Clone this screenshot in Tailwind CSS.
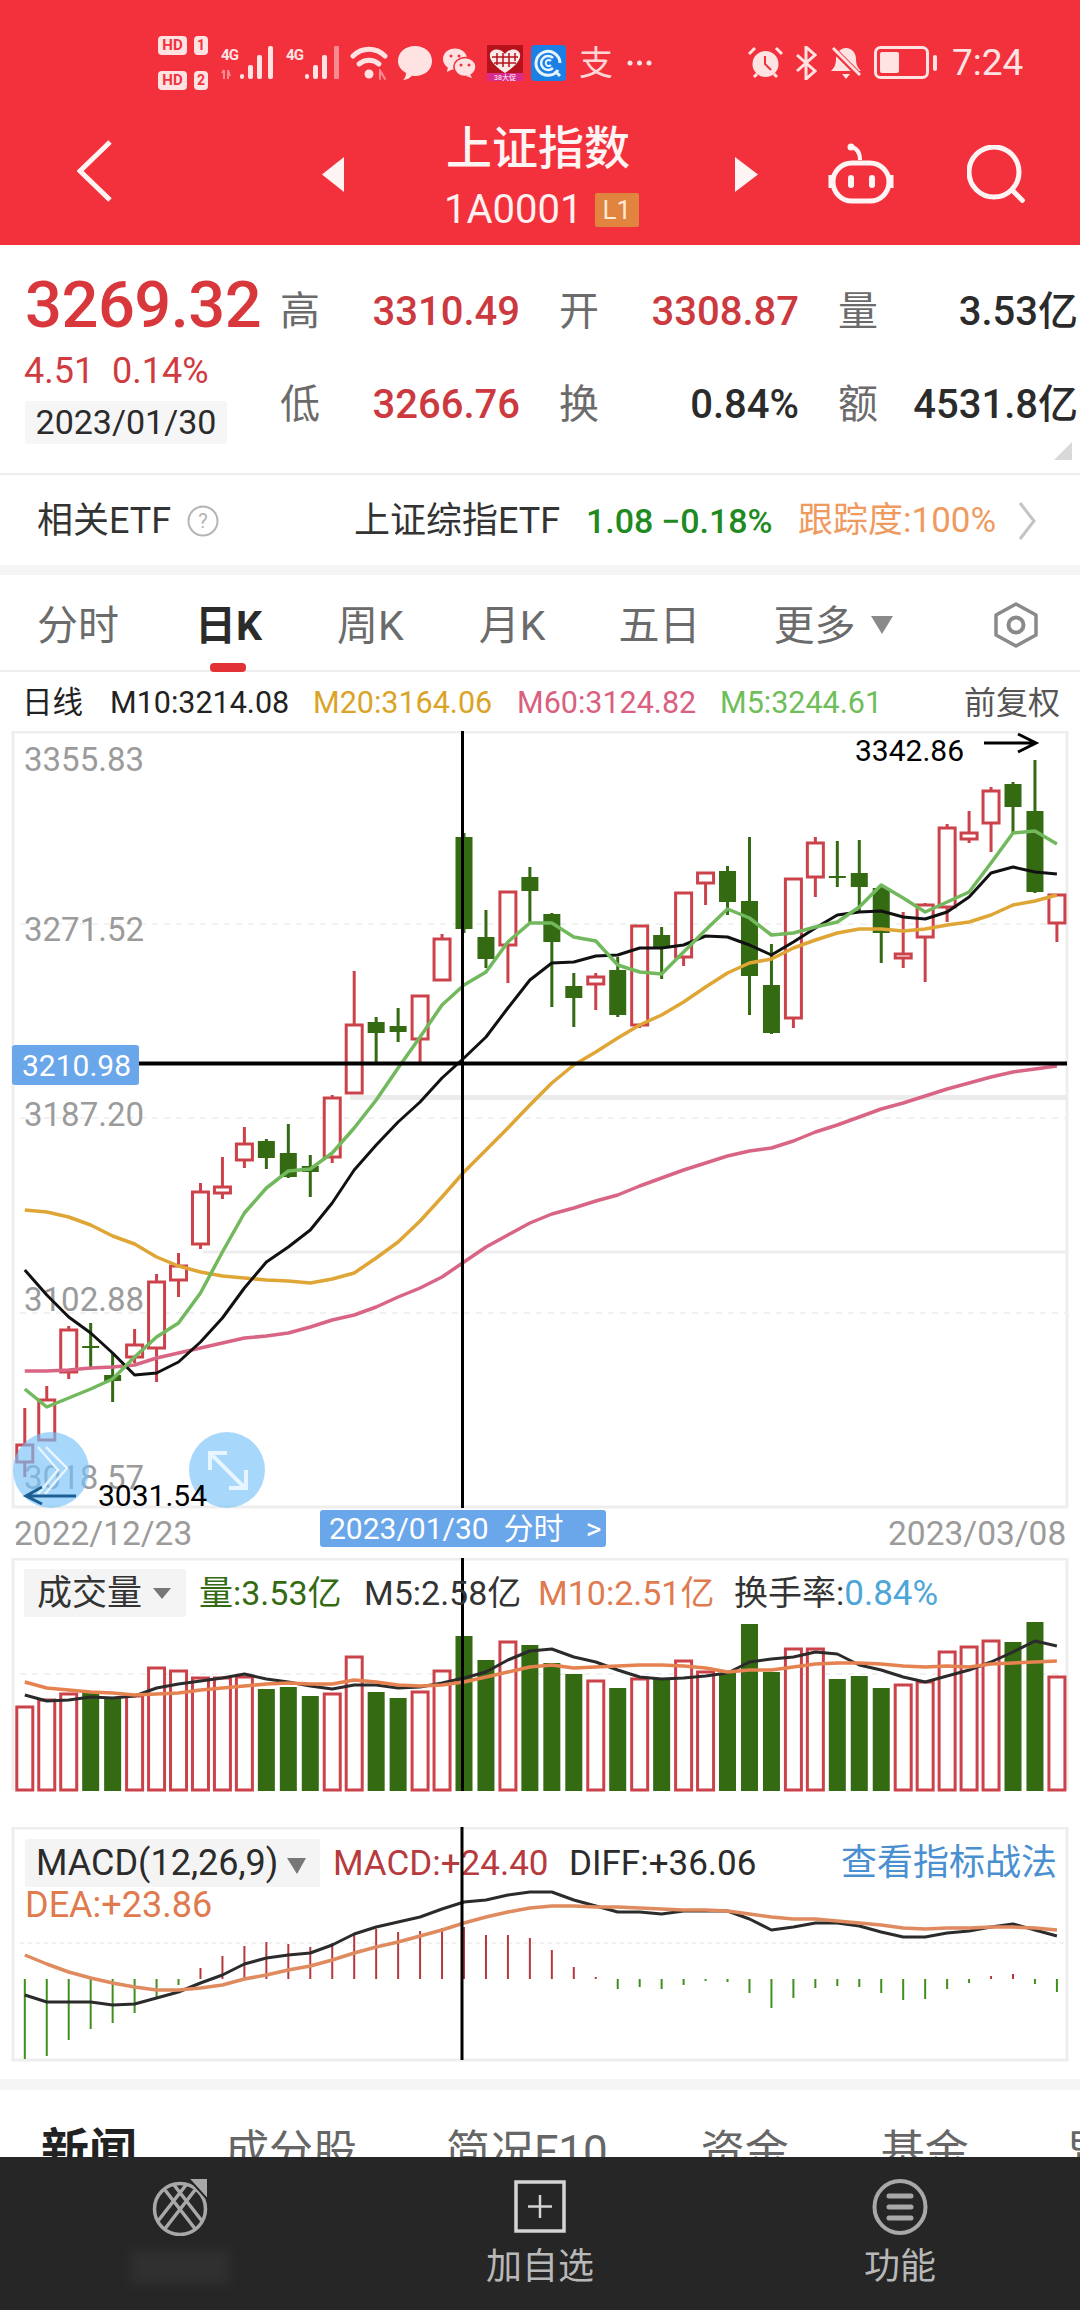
<!DOCTYPE html>
<html lang="zh">
  <head>
    <meta charset="UTF-8" />
    <meta name="viewport" content="width=device-width, initial-scale=1.0" />
    <title>上证指数</title>
    <script src="https://cdn.jsdelivr.net/npm/@tailwindcss/browser@4"></script>
  </head>

  <body class="w-[1080px] h-[2310px] overflow-hidden bg-white [font-family:Roboto,'Noto_Sans_CJK_SC',sans-serif]">
    <!-- red header -->
    <header class="h-[245px] bg-[#f2313d] text-white">
      <!-- status bar -->
      <div class="h-[124px] flex items-center pl-[158px] pt-[1px]">
        <div class="w-[50px] flex flex-col gap-[16px]">
          <div class="flex justify-between">
            <span class="w-[29px] h-[19px] rounded-[4px] bg-[#ffe3e3] text-[#f2313d] text-[15px] leading-[19px] font-bold text-center">HD</span>
            <span class="w-[14px] h-[19px] rounded-[4px] bg-[#ffe3e3] text-[#f2313d] text-[14px] leading-[19px] font-bold text-center">1</span>
          </div>
          <div class="flex justify-between">
            <span class="w-[29px] h-[19px] rounded-[4px] bg-[#ffe3e3] text-[#f2313d] text-[15px] leading-[19px] font-bold text-center">HD</span>
            <span class="w-[14px] h-[19px] rounded-[4px] bg-[#ffe3e3] text-[#f2313d] text-[14px] leading-[19px] font-bold text-center">2</span>
          </div>
        </div>
        <svg class="ml-[13px]" width="53" height="34" viewBox="0 0 53 34" fill="#ffe3e3">
          <text x="0" y="14" font-size="15" font-weight="700" textLength="18">4G</text>
          <path d="M3 24v9M3 24l-2 3M7 33v-9l2 6" stroke="#f98a90" stroke-width="2" fill="none" />
          <rect x="19" y="28" width="4" height="5" rx="2" /><rect x="27" y="19" width="5" height="14" rx="2" /><rect x="36" y="9" width="5" height="24" rx="2" /><rect x="47" y="0" width="5" height="33" rx="2" />
        </svg>
        <svg class="ml-[12px]" width="53" height="34" viewBox="0 0 53 34" fill="#ffe3e3">
          <text x="0" y="14" font-size="15" font-weight="700" textLength="18">4G</text>
          <rect x="19" y="28" width="4" height="5" rx="2" /><rect x="27" y="19" width="5" height="14" rx="2" /><rect x="36" y="9" width="5" height="24" rx="2" /><rect x="48" y="0" width="5" height="33" rx="1" fill="#f98a90" />
        </svg>
        <svg class="ml-[11px]" width="38" height="34" viewBox="0 0 38 34" fill="none" stroke="#ffe3e3" stroke-width="5" stroke-linecap="round">
          <path d="M3 10c9-9 23-9 32 0" /><path d="M9 18c6-5 14-5 20 0" /><circle cx="19" cy="28" r="4.500" fill="#ffe3e3" stroke="none" />
          <path d="M30 24v9M35 33l-4-7" stroke="#f98a90" stroke-width="2" />
        </svg>
        <svg class="ml-[10px]" width="34" height="34" viewBox="0 0 34 34" fill="#ffe3e3">
          <path d="M17 0c10 0 17 6.500 17 15s-7 15-17 15c-1 0-2 0-3-.2C12 32 9 34 5 34c2-2 3-4 3-7C3 24 0 20 0 15 0 6.500 7 0 17 0z" />
        </svg>
        <svg class="ml-[11px]" width="33" height="30" viewBox="0 0 33 30" fill="#ffe3e3">
          <ellipse cx="12" cy="11" rx="12" ry="10.500" /><path d="M5 18l-1 6 6-3z" />
          <ellipse cx="22" cy="19" rx="11" ry="9.500" stroke="#f2313d" stroke-width="1.500" /><path d="M27 26l2 4-6-2z" />
          <circle cx="8" cy="8" r="1.500" fill="#f2313d" /><circle cx="16" cy="8" r="1.500" fill="#f2313d" /><circle cx="18" cy="17" r="1.500" fill="#f2313d" /><circle cx="26" cy="17" r="1.500" fill="#f2313d" />
        </svg>
        <svg class="ml-[11px]" width="36" height="36" viewBox="0 0 36 36">
          <rect width="36" height="36" fill="#b5121b" />
          <rect y="28" width="36" height="8" fill="#d92a8d" />
          <path d="M18 28C6 20 2 14 3 9c1-5 10-7 15 0 5-7 14-5 15 0 1 5-3 11-15 19z" fill="#fbe9e9" />
          <path d="M10 8v12M16 8v14M22 8v14M28 8v8M5 12h26M7 18h22" stroke="#b5121b" stroke-width="1.500" />
          <text x="18" y="35" font-size="7" fill="#fff" text-anchor="middle">38大促</text>
        </svg>
        <svg class="ml-[8px]" width="35" height="36" viewBox="0 0 35 36" fill="none">
          <rect width="35" height="36" rx="4" fill="#1b7fe3" />
          <path d="M27 25a12 12 0 1 1 2-7M29 31l-5-5" stroke="#e6f5ff" stroke-width="3" />
          <path d="M22 13a7 7 0 1 0 0 10" stroke="#e6f5ff" stroke-width="2.500" />
          <path d="M20 16a3 3 0 1 0 0 4" stroke="#e6f5ff" stroke-width="2" />
        </svg>
        <span class="ml-[13px] w-[33px] text-[34px] leading-[36px] text-[#ffd6d6]">支</span>
        <svg class="ml-[15px]" width="25" height="6" viewBox="0 0 25 6" fill="#ffe3e3"><circle cx="3" cy="3" r="2.500" /><circle cx="12.500" cy="3" r="2.500" /><circle cx="22" cy="3" r="2.500" /></svg>
        <svg class="ml-[96px]" width="35" height="34" viewBox="0 0 35 34" fill="none">
          <circle cx="17.500" cy="18" r="13" fill="#ffe3e3" />
          <path d="M17 10v8l6 6" stroke="#f2313d" stroke-width="2" />
          <path d="M1 8l6-6M34 8l-6-6M6 31l3-3M29 31l-3-3" stroke="#ffe3e3" stroke-width="3" />
        </svg>
        <svg class="ml-[12px]" width="22" height="34" viewBox="0 0 22 34" fill="none" stroke="#ffe3e3" stroke-width="3">
          <path d="M2 9l18 16-9 8V1l9 8L2 25" />
        </svg>
        <svg class="ml-[13px]" width="32" height="34" viewBox="0 0 32 34" fill="none">
          <path d="M16 2c6 0 10 5 10 11 0 6 2 9 5 12H1c3-3 5-6 5-12C6 7 10 2 16 2z" fill="#ffe3e3" />
          <path d="M12 28h8l-4 5z" fill="#ffe3e3" />
          <path d="M2 2l28 28" stroke="#f2313d" stroke-width="6" /><path d="M3 2l27 27" stroke="#ffe3e3" stroke-width="3" />
        </svg>
        <svg class="ml-[12px]" width="63" height="33" viewBox="0 0 63 33" fill="none">
          <rect x="1.500" y="1.500" width="52" height="30" rx="5" stroke="#ffe3e3" stroke-width="3" />
          <rect x="6" y="6" width="19" height="21" rx="2" fill="#ffe3e3" />
          <rect x="59" y="9" width="4" height="16" rx="2" fill="#ffe3e3" />
        </svg>
        <span class="ml-[15px] text-[37px] leading-[40px] text-[#ffe3e3]">7:24</span>
      </div>
      <!-- title row -->
      <nav class="h-[121px] flex items-start pl-[77px]">
        <svg class="mt-[16px]" width="35" height="62" viewBox="0 0 35 62" fill="none" stroke="#fff4f4" stroke-width="5"><path d="M33 2L3 31l30 29" /></svg>
        <svg class="ml-[210px] mt-[33px]" width="22" height="35" viewBox="0 0 22 35" fill="#fff4f4"><path d="M22 0v35L0 17.500z" /></svg>
        <div class="ml-[100px] w-[195px]">
          <div class="pl-[2px] text-[46px] leading-[46px] font-medium text-[#fff4f4] mt-[1px]">上证指数</div>
          <div class="mt-[22px] flex items-center h-[34px]">
            <span class="text-[40px] leading-[34px] text-[#fff0f0]">1A0001</span>
            <span class="ml-[12px] w-[48px] h-[34px] rounded-[2px] bg-[#e0843f] text-[26px] leading-[34px] text-center text-[#ffe9d6]">L1</span>
          </div>
        </div>
        <svg class="ml-[96px] mt-[33px]" width="23" height="35" viewBox="0 0 23 35" fill="#fff4f4"><path d="M0 0v35l23-17.500z" /></svg>
        <svg class="ml-[69px] mt-[18px]" width="68" height="62" viewBox="0 0 68 62" fill="none" stroke="#fff4f4" stroke-width="5">
          <rect x="6" y="21" width="56" height="38" rx="19" />
          <path d="M4 33v13M64 33v13" />
          <path d="M33 18c0-7-3-12-9-13" stroke-width="4" /><circle cx="24" cy="5" r="3.500" fill="#fff4f4" stroke="none" />
          <rect x="21" y="33" width="6" height="13" rx="3" fill="#fff4f4" stroke="none" /><rect x="42" y="33" width="6" height="13" rx="3" fill="#fff4f4" stroke="none" />
        </svg>
        <svg class="ml-[72px] mt-[21px]" width="58" height="58" viewBox="0 0 58 58" fill="none" stroke="#fff4f4" stroke-width="5"><circle cx="27" cy="27" r="25" /><path d="M45 45l12 12" /></svg>
      </nav>
    </header>

    <!-- quote -->
    <section class="relative h-[228px] flex pl-[25px]">
      <div class="w-[255px]">
        <div class="pt-[24px] text-[65px] leading-[72px] font-medium text-[#d8383c] tracking-[-0.5px] whitespace-nowrap">3269.32</div>
        <div class="mt-[10px] text-[36px] leading-[40px] text-[#cf3b3f] whitespace-pre -ml-[1px]">4.51  0.14%</div>
        <div class="mt-[10px] w-[202px] h-[43px] bg-[#f6f6f6] rounded-[3px] text-[34px] leading-[43px] text-center text-[#2b2b2b]">2023/01/30</div>
      </div>
      <div class="pt-[20px] grid grid-cols-[40px_200px_80px_199px_81px_198px] auto-rows-[93px] items-center text-[40px] text-[#6b6b6b]">
        <span>高</span><span class="text-right text-[#cc3a3f] font-medium">3310.49</span>
        <span class="pl-[39px]">开</span><span class="text-right text-[#cc3a3f] font-medium">3308.87</span>
        <span class="pl-[39px]">量</span><span class="text-right text-[#2b2b2b] font-medium">3.53亿</span>
        <span>低</span><span class="text-right text-[#cc3a3f] font-medium">3266.76</span>
        <span class="pl-[39px]">换</span><span class="text-right text-[#2b2b2b] font-medium">0.84%</span>
        <span class="pl-[39px]">额</span><span class="text-right text-[#2b2b2b] font-medium">4531.8亿</span>
      </div>
      <svg class="absolute right-[8px] bottom-[13px]" width="18" height="18" viewBox="0 0 18 18" fill="#d9d9d9"><path d="M18 0v18H0z" /></svg>
    </section>

    <!-- related ETF -->
    <section class="h-[92px] border-t-2 border-[#eeeeee] pl-[37px] pt-[2px] grid grid-cols-[150px_167px_232px_75px_137px_220px_18px] items-center text-[#333333] text-[36px]">
      <span>相关ETF</span>
      <svg width="32" height="32" viewBox="0 0 32 32" fill="none"><circle cx="16" cy="16" r="14.500" stroke="#b5b5b5" stroke-width="2" /><text x="16" y="23" font-size="20" fill="#b5b5b5" text-anchor="middle">?</text></svg>
      <span>上证综指ETF</span>
      <span class="text-[34px] text-[#1f8a1f] font-medium">1.08</span>
      <span class="text-[34px] text-[#1f8a1f] font-medium">−0.18%</span>
      <span class="text-[35px] text-[#ef9a5f] whitespace-nowrap">跟踪度:100%</span>
      <svg width="18" height="40" viewBox="0 0 18 40" fill="none" stroke="#c4c4c4" stroke-width="3"><path d="M2 2l14 18L2 38" /></svg>
    </section>
    <div class="h-[10px] bg-[#f5f5f5]"></div>

    <!-- period tabs -->
    <section class="h-[97px] border-b-2 border-[#eeeeee]">
      <div class="flex items-center pl-[37px] pt-[31px] h-[71px] text-[41px] leading-[40px] text-[#6b6b6b]">
        <span>分时</span>
        <span class="ml-[76px] font-bold text-[#2b2b2b]">日K</span>
        <span class="ml-[75px]">周K</span>
        <span class="ml-[75px]">月K</span>
        <span class="ml-[73px]">五日</span>
        <span class="ml-[73px]">更多</span>
        <svg class="ml-[15px] -mt-[2px]" width="22" height="18" viewBox="0 0 22 18" fill="#8a8a8a"><path d="M0 0h22L11 18z" /></svg>
        <svg class="ml-[100px] -mt-[2px]" width="46" height="46" viewBox="0 0 46 46" fill="none" stroke="#8a8a8a" stroke-width="3.500"><path d="M23 2l20 11v20L23 44 3 33V13z" stroke-linejoin="round" /><circle cx="23" cy="23" r="7.500" stroke-width="4" /></svg>
      </div>
      <div class="ml-[210px] mt-[17px] w-[36px] h-[9px] rounded-[4px] bg-[#e33236]"></div>
    </section>

    <!-- moving average legend -->
    <section class="h-[59px] pl-[22px] pt-[3px] grid grid-cols-[88px_203px_204px_203px_244px_96px] items-center text-[30.5px] text-[#222222]">
      <span>日线</span>
      <span>M10:3214.08</span>
      <span class="text-[#d9a428]">M20:3164.06</span>
      <span class="text-[#d9607f]">M60:3124.82</span>
      <span class="text-[#6fbe5a]">M5:3244.61</span>
      <span class="text-[#555555] text-[32px] whitespace-nowrap">前复权</span>
    </section>

    <!-- candlestick chart -->
    <svg class="block" width="1080" height="827" viewBox="0 731 1080 827" font-size="33" fill="#9b9b9b">
      <rect x="13" y="732" width="1054" height="775" fill="none" stroke="#eeeeee" stroke-width="3" />
      <path d="M20 924H1067M20 1118H1067M20 1313H1067" stroke="#f1f1f1" stroke-width="2" stroke-dasharray="6 6" />
      <path d="M350 1097.500H1067" stroke="#ebebeb" stroke-width="5" />
      <path d="M203 1252H1067" stroke="#eeeeee" stroke-width="3" />
      <text x="24" y="771">3355.83</text>
      <text x="24" y="941">3271.52</text>
      <text x="24" y="1126">3187.20</text>
      <text x="24" y="1311">3102.88</text>
      <text x="24" y="1489">3018.57</text>
      <g id="candles"></g>
      <g id="ma-lines" fill="none" stroke-linejoin="round"></g>
      <path d="M462.500 731V1508" stroke="#000" stroke-width="3" />
      <path d="M139 1063.500H1067" stroke="#000" stroke-width="4" />
      <rect x="12" y="1045" width="127" height="40" rx="3" fill="#6aa6ea" />
      <text x="22" y="1076" font-size="30" fill="#fff">3210.98</text>
      <text x="855" y="761" font-size="30" fill="#000">3342.86</text>
      <path d="M984 743h52M1018 734l18 9-18 9" fill="none" stroke="#000" stroke-width="3" />
      <circle cx="51" cy="1470" r="38" fill="#78c3fa" fill-opacity="0.65" />
      <path d="M38 1447l20 23-20 24M46 1447l21 21-22 26" fill="none" stroke="#e6f5ff" stroke-width="2.500" />
      <circle cx="227" cy="1470" r="38" fill="#78c3fa" fill-opacity="0.65" />
      <path d="M212 1455l33 33M210 1470v-17h17M246 1470v18h-17" fill="none" stroke="#e6f5ff" stroke-width="4" />
      <path d="M26 1496h50M42 1487l-16 9 16 8" fill="none" stroke="#1d5f93" stroke-width="3" />
      <text x="98" y="1506" font-size="30" fill="#000">3031.54</text>
      <rect x="320" y="1510" width="286" height="37" rx="3" fill="#6aa6ea" />
      <text x="329" y="1539" font-size="30" fill="#fff" xml:space="preserve">2023/01/30  分时   &gt;</text>
      <text x="14" y="1545" font-size="33.500">2022/12/23</text>
      <text x="888" y="1545" font-size="33.500">2023/03/08</text>
    </svg>

    <!-- volume chart -->
    <svg class="block" width="1080" height="269" viewBox="0 1558 1080 269" font-size="34">
      <path d="M13 1790V1559H1067V1790" fill="none" stroke="#eeeeee" stroke-width="3" />
      <path d="M20 1674H1067" stroke="#f1f1f1" stroke-width="2" stroke-dasharray="6 6" />
      <g id="volume"></g>
      <g id="volume-lines" fill="none" stroke-linejoin="round"></g>
      <path d="M462.500 1558V1791" stroke="#000" stroke-width="3" />
      <rect x="24" y="1569" width="162" height="48" rx="2" fill="#f4f4f4" />
      <text x="37" y="1605" fill="#333333" font-size="35">成交量</text>
      <path d="M153 1588h18l-9 11z" fill="#777777" />
      <text x="199" y="1605" fill="#336a12">量:3.53亿</text>
      <text x="364" y="1605" fill="#333333">M5:2.58亿</text>
      <text x="538" y="1605" fill="#e07b4f">M10:2.51亿</text>
      <text x="734" y="1605" fill="#333333">换手率:<tspan fill="#4ea6d8" font-size="35">0.84%</tspan></text>
    </svg>

    <!-- MACD chart -->
    <svg class="block" width="1080" height="252" viewBox="0 1827 1080 252" font-size="35">
      <rect x="13" y="1828" width="1054" height="232" fill="none" stroke="#eeeeee" stroke-width="3" />
      <path d="M20 1943H1067" stroke="#f1f1f1" stroke-width="2" stroke-dasharray="4 4" />
      <rect x="25" y="1839" width="295" height="48" rx="2" fill="#f4f4f4" />
      <text x="36" y="1875" fill="#2b2b2b" font-size="36">MACD(12,26,9)</text>
      <path d="M287 1858h19l-9 16z" fill="#777777" />
      <text x="333" y="1875" fill="#b63a3e">MACD:+24.40</text>
      <text x="569" y="1875" fill="#2b2b2b">DIFF:+36.06</text>
      <text x="841" y="1875" fill="#4a8fd0" font-size="36">查看指标战法</text>
      <text x="25" y="1917" fill="#e07b4f" font-size="36">DEA:+23.86</text>
      <g id="macd-bars"></g>
      <g id="macd-lines" fill="none" stroke-linejoin="round"></g>
      <path d="M462 1827V2060" stroke="#000" stroke-width="3" />
    </svg>
    <div class="h-[11px] bg-[#f5f5f5]"></div>

    <!-- news tabs, cut off by the bottom bar -->
    <section class="h-[67px] overflow-hidden pl-[41px] pt-[38px] flex text-[44px] leading-[48px] text-[#666666] whitespace-nowrap">
      <span class="text-[48px] font-bold text-[#222222]">新闻</span>
      <span class="ml-[88px]">成分股</span>
      <span class="ml-[89px]">简况F10</span>
      <span class="ml-[93px]">资金</span>
      <span class="ml-[92px]">基金</span>
      <span class="ml-[97px]">异动</span>
    </section>

    <!-- bottom bar -->
    <footer class="h-[153px] bg-[#262626] pt-[21px] grid grid-cols-3 text-[36px] leading-[36px] text-[#b8b8b8]">
      <div class="flex flex-col items-center">
        <svg width="56" height="58" viewBox="0 0 56 58" fill="none" stroke="#a8a8a8" stroke-width="3.500">
          <circle cx="28" cy="31" r="25.500" />
          <path d="M13 12l31 40M22 7l28 36M43 12L12 52M34 7L6 43" />
          <path d="M36 0h20v22z" fill="#a8a8a8" stroke="#262626" stroke-width="2" />
        </svg>
        <div class="mt-[14px] w-[100px] h-[34px] bg-[#303030] blur-[6px]"></div>
      </div>
      <div class="flex flex-col items-center">
        <svg width="52" height="58" viewBox="0 0 52 58" fill="none" stroke="#d4d4d4"><rect x="2" y="4" width="48" height="49" stroke-width="3.500" /><path d="M26 17v23M14 28.500h24" stroke-width="2.500" /></svg>
        <span class="mt-[13px]">加自选</span>
      </div>
      <div class="flex flex-col items-center">
        <svg width="56" height="58" viewBox="0 0 56 58" fill="none" stroke="#a8a8a8"><ellipse cx="28" cy="29" rx="25.500" ry="26" stroke-width="4" /><path d="M17 18h22M17 29h22M17 40h22" stroke-width="5" stroke-linecap="round" /></svg>
        <span class="mt-[13px]">功能</span>
      </div>
    </footer>

    <script>
      const RED = "#cc424a";
      const GREEN = "#336a12";
      const xAt = (i) => 24.8 + 21.96 * i;
      const points = (ys) => ys.map((y, i) => `${xAt(i).toFixed(1)},${y}`).join(" ");
      const line = (ys, color, width = 3.5) =>
        `<polyline points="${points(ys)}" stroke="${color}" stroke-width="${width}" />`;

      // high, body top, body bottom, low, up(1) / down(0)
      const candles = [
        [1408, 1445, 1462, 1477, 1], [1386, 1400, 1440, 1440, 1], [1326, 1330, 1372, 1379, 1], [1323, 1346, 1348, 1368, 0],
        [1353, 1375, 1381, 1402, 0], [1329, 1345, 1357, 1363, 1], [1274, 1282, 1348, 1382, 1], [1253, 1266, 1280, 1297, 1],
        [1183, 1192, 1244, 1249, 1], [1157, 1187, 1193, 1199, 1], [1127, 1144, 1160, 1168, 1], [1139, 1141, 1158, 1169, 0],
        [1124, 1153, 1177, 1178, 0], [1155, 1166, 1172, 1197, 0], [1095, 1098, 1157, 1163, 1], [971, 1025, 1093, 1094, 1],
        [1017, 1022, 1033, 1063, 0], [1008, 1026, 1032, 1042, 0], [996, 996, 1039, 1062, 1], [934, 939, 980, 981, 1],
        [833, 837, 929, 933, 0], [910, 937, 959, 968, 0], [892, 892, 945, 983, 1], [867, 877, 891, 922, 0],
        [913, 914, 942, 1007, 0], [973, 986, 998, 1027, 0], [973, 977, 984, 1010, 1], [957, 970, 1015, 1017, 0],
        [926, 926, 1025, 1028, 1], [927, 935, 948, 979, 0], [893, 893, 957, 966, 1], [873, 873, 883, 905, 1],
        [866, 871, 902, 915, 0], [837, 901, 976, 1015, 0], [944, 985, 1033, 1034, 0], [879, 879, 1018, 1028, 1],
        [837, 843, 877, 897, 1], [841, 876, 878, 887, 0], [840, 873, 887, 913, 0], [885, 888, 933, 963, 0],
        [912, 954, 958, 968, 1], [903, 905, 937, 982, 1], [824, 828, 907, 922, 1], [811, 833, 839, 843, 1],
        [787, 791, 823, 852, 1], [782, 784, 807, 833, 0], [760, 811, 892, 893, 0], [895, 895, 923, 942, 1],
      ];
      document.getElementById("candles").innerHTML = candles
        .map(([high, top, bottom, low, up], i) => {
          const x = xAt(i);
          const color = up ? RED : GREEN;
          const wick = `<path d="M${x} ${high}V${top}M${x} ${bottom}V${low}" stroke="${color}" stroke-width="3" />`;
          return up
            ? wick + `<rect x="${x - 8}" y="${top}" width="16" height="${bottom - top}" fill="#fff" stroke="${color}" stroke-width="3" />`
            : wick + `<rect x="${x - 8.5}" y="${top}" width="17" height="${bottom - top}" fill="${color}" />`;
        })
        .join("");

      const m5 = [1389, 1407, 1398, 1389, 1379, 1357, 1337, 1323, 1293, 1252, 1213, 1188, 1171, 1169, 1153, 1128, 1100, 1068, 1037, 1005, 985, 972, 942, 923, 923, 937, 941, 965, 972, 974, 952, 930, 909, 918, 935, 933, 927, 922, 907, 885, 898, 912, 902, 892, 863, 833, 831, 844];
      const m10 = [1270, 1295, 1317, 1333, 1353, 1375, 1373, 1362, 1342, 1318, 1288, 1262, 1247, 1230, 1203, 1170, 1145, 1122, 1102, 1078, 1058, 1037, 1008, 980, 963, 962, 956, 955, 948, 948, 945, 936, 937, 945, 955, 942, 928, 915, 912, 911, 917, 919, 912, 897, 873, 867, 872, 874];
      const m20 = [1210, 1212, 1217, 1225, 1236, 1244, 1257, 1266, 1272, 1276, 1278, 1280, 1281, 1283, 1279, 1273, 1258, 1242, 1221, 1197, 1172, 1150, 1128, 1105, 1083, 1065, 1052, 1038, 1025, 1015, 1002, 987, 973, 963, 959, 948, 940, 933, 929, 929, 931, 929, 925, 922, 915, 905, 901, 895];
      const m60 = [1371, 1371, 1370, 1368, 1367, 1365, 1358, 1353, 1348, 1343, 1338, 1336, 1333, 1327, 1320, 1315, 1307, 1297, 1288, 1277, 1262, 1247, 1235, 1223, 1214, 1208, 1201, 1195, 1186, 1178, 1170, 1163, 1156, 1151, 1148, 1141, 1132, 1125, 1117, 1109, 1103, 1096, 1089, 1083, 1077, 1072, 1069, 1066];
      document.getElementById("ma-lines").innerHTML =
        line(m60, "#d96585") + line(m20, "#dfa636") + line(m10, "#111111", 3) + line(m5, "#72b85c");

      // top of each bar, negative = down day
      const volume = [1707, 1700, 1694, -1693, -1698, 1696, 1668, 1671, 1678, 1678, 1677, -1689, -1687, -1696, 1694, 1657, -1692, -1698, 1692, 1671, -1636, -1660, 1642, -1645, -1663, -1674, 1681, -1688, 1679, -1679, 1661, 1672, -1673, -1624, -1672, 1649, 1649, -1679, -1676, -1688, 1685, 1682, 1652, 1647, 1641, -1642, -1622, 1677];
      const baseline = 1790;
      document.getElementById("volume").innerHTML = volume
        .map((v, i) => {
          const x = xAt(i);
          const top = Math.abs(v);
          return v > 0
            ? `<rect x="${x - 8}" y="${top}" width="16" height="${baseline - top}" fill="#fff" stroke="${RED}" stroke-width="3" />`
            : `<rect x="${x - 8.5}" y="${top}" width="17" height="${baseline - top + 1}" fill="${GREEN}" />`;
        })
        .join("");
      const volFast = [1695, 1701, 1700, 1697, 1698, 1696, 1688, 1684, 1681, 1678, 1674, 1679, 1682, 1686, 1689, 1685, 1685, 1688, 1687, 1683, 1678, 1672, 1660, 1651, 1649, 1657, 1662, 1670, 1677, 1679, 1678, 1676, 1673, 1662, 1659, 1657, 1652, 1654, 1665, 1670, 1677, 1682, 1676, 1670, 1662, 1652, 1641, 1646];
      const volSlow = [1682, 1688, 1690, 1692, 1693, 1695, 1694, 1693, 1690, 1688, 1686, 1684, 1683, 1684, 1684, 1680, 1682, 1685, 1686, 1685, 1682, 1677, 1672, 1667, 1665, 1668, 1667, 1666, 1665, 1665, 1666, 1668, 1672, 1670, 1670, 1667, 1664, 1663, 1663, 1664, 1666, 1667, 1666, 1667, 1664, 1663, 1662, 1661];
      document.getElementById("volume-lines").innerHTML = line(volFast, "#2b2b2b", 3) + line(volSlow, "#e5824f");

      const macd = [2059, 2056, 2040, 2029, 2023, 2013, 1997, 1985, 1968, 1956, 1946, 1942, 1944, 1947, 1943, 1935, 1929, 1932, 1931, 1928, 1927, 1935, 1935, 1938, 1950, 1967, 1977, 1989, 1987, 1989, 1985, 1981, 1982, 1993, 2008, 1998, 1988, 1986, 1987, 1993, 2000, 1999, 1989, 1983, 1976, 1974, 1984, 1992];
      const zero = 1979;
      document.getElementById("macd-bars").innerHTML = macd
        .map((y, i) => `<path d="M${xAt(i)} ${zero}V${y}" stroke="${y < zero ? "#b5383c" : "#3f8f1f"}" stroke-width="2" />`)
        .join("");
      const diff = [1995, 2002, 2002, 2002, 2005, 2004, 1998, 1992, 1983, 1975, 1964, 1958, 1955, 1953, 1945, 1934, 1927, 1922, 1917, 1909, 1902, 1900, 1895, 1892, 1892, 1900, 1906, 1912, 1912, 1914, 1911, 1911, 1911, 1919, 1930, 1927, 1923, 1923, 1926, 1932, 1937, 1937, 1933, 1931, 1927, 1924, 1930, 1936];
      const dea = [1955, 1964, 1972, 1978, 1983, 1987, 1990, 1990, 1988, 1985, 1979, 1975, 1970, 1966, 1960, 1953, 1947, 1942, 1936, 1930, 1923, 1917, 1912, 1908, 1906, 1906, 1907, 1907, 1908, 1909, 1910, 1910, 1911, 1914, 1917, 1919, 1919, 1921, 1923, 1925, 1928, 1929, 1928, 1928, 1927, 1927, 1928, 1930];
      document.getElementById("macd-lines").innerHTML = line(diff, "#2b2b2b", 3) + line(dea, "#e08a5f");
    </script>
  </body>
</html>
